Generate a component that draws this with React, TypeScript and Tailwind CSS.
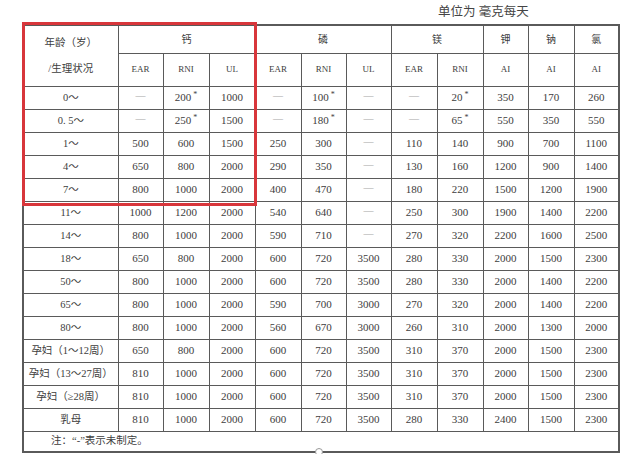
import React from "react";

type Cell = string;
const D = "—";

const rows: { label: string; vals: Cell[] }[] = [
  { label: "0～", vals: [D, "200*", "1000", D, "100*", D, D, "20*", "350", "170", "260"] },
  { label: "0. 5～", vals: [D, "250*", "1500", D, "180*", D, D, "65*", "550", "350", "550"] },
  { label: "1～", vals: ["500", "600", "1500", "250", "300", D, "110", "140", "900", "700", "1100"] },
  { label: "4～", vals: ["650", "800", "2000", "290", "350", D, "130", "160", "1200", "900", "1400"] },
  { label: "7～", vals: ["800", "1000", "2000", "400", "470", D, "180", "220", "1500", "1200", "1900"] },
  { label: "11～", vals: ["1000", "1200", "2000", "540", "640", D, "250", "300", "1900", "1400", "2200"] },
  { label: "14～", vals: ["800", "1000", "2000", "590", "710", D, "270", "320", "2200", "1600", "2500"] },
  { label: "18～", vals: ["650", "800", "2000", "600", "720", "3500", "280", "330", "2000", "1500", "2300"] },
  { label: "50～", vals: ["800", "1000", "2000", "600", "720", "3500", "280", "330", "2000", "1400", "2200"] },
  { label: "65～", vals: ["800", "1000", "2000", "590", "700", "3000", "270", "320", "2000", "1400", "2200"] },
  { label: "80～", vals: ["800", "1000", "2000", "560", "670", "3000", "260", "310", "2000", "1300", "2000"] },
  { label: "孕妇（1～12周）", vals: ["650", "800", "2000", "600", "720", "3500", "310", "370", "2000", "1500", "2300"] },
  { label: "孕妇（13～27周）", vals: ["810", "1000", "2000", "600", "720", "3500", "310", "370", "2000", "1500", "2300"] },
  { label: "孕妇（≥28周）", vals: ["810", "1000", "2000", "600", "720", "3500", "310", "370", "2000", "1500", "2300"] },
  { label: "乳母", vals: ["810", "1000", "2000", "600", "720", "3500", "280", "330", "2400", "1500", "2300"] },
];

const widths = [95, 45, 46, 46, 46, 45, 45, 46, 46, 45, 46, 45];

function Val({ v }: { v: string }) {
  if (v === D) {
    return <span className="text-[#a8a8a8] text-[10px] relative top-[-2px]">—</span>;
  }
  if (v.endsWith("*")) {
    return (
      <span>
        {v.slice(0, -1)}
        <span className="text-[8px] relative top-[-4px] ml-[2px]">*</span>
      </span>
    );
  }
  return <span>{v}</span>;
}

const td = "border border-[#5a5a5a] text-center align-middle p-0";

export default function App() {
  return (
    <div
      className="relative w-[635px] h-[454px] bg-white overflow-hidden text-[#3d3d3d]"
      style={{ fontFamily: '"Liberation Serif", "Noto Sans CJK SC", serif' }}
    >
      <div className="h-[24px] pl-[438px] pt-[4px] text-[12.5px] leading-[16px] text-[#444]">
        单位为 毫克每天
      </div>
      <table className="ml-[22px] w-[596px] table-fixed border-collapse border-2 border-[#5a5a5a] text-[11px]">
        <colgroup>
          {widths.map((w, i) => (
            <col key={i} style={{ width: w }} />
          ))}
        </colgroup>
        <tbody>
          <tr className="h-[28px]">
            <td rowSpan={2} className={td + " text-[10.5px]"}>
              <div className="flex flex-col items-center gap-[11px]">
                <span>年龄（岁）</span>
                <span>/生理状况</span>
              </div>
            </td>
            <td colSpan={3} className={td + " text-[10px]"}>钙</td>
            <td colSpan={3} className={td + " text-[10px]"}>磷</td>
            <td colSpan={2} className={td + " text-[10px]"}>镁</td>
            <td className={td + " text-[10px]"}>钾</td>
            <td className={td + " text-[10px]"}>钠</td>
            <td className={td + " text-[10px]"}>氯</td>
          </tr>
          <tr className="h-[33px] text-[9px]">
            {["EAR", "RNI", "UL", "EAR", "RNI", "UL", "EAR", "RNI", "AI", "AI", "AI"].map((h, i) => (
              <td key={i} className={td}>
                {h}
              </td>
            ))}
          </tr>
          {rows.map((r, ri) => (
            <tr key={ri} className="h-[23px]">
              <td className={td + " text-[10.5px]"}>{r.label}</td>
              {r.vals.map((v, i) => (
                <td key={i} className={td}>
                  <Val v={v} />
                </td>
              ))}
            </tr>
          ))}
          <tr className="h-[21px]">
            <td colSpan={12} className="border border-[#5a5a5a] p-0 pl-[27px] text-left text-[10.5px] align-middle">
              注：“-”表示未制定。
            </td>
          </tr>
        </tbody>
      </table>
      <div className="absolute left-[22px] top-[22px] w-[235px] h-[184px] border-[3px] border-[#d8363b]" />
      <div className="absolute left-[315px] top-[448px] w-[8px] h-[8px] rounded-full border border-[#999] bg-white" />
    </div>
  );
}
